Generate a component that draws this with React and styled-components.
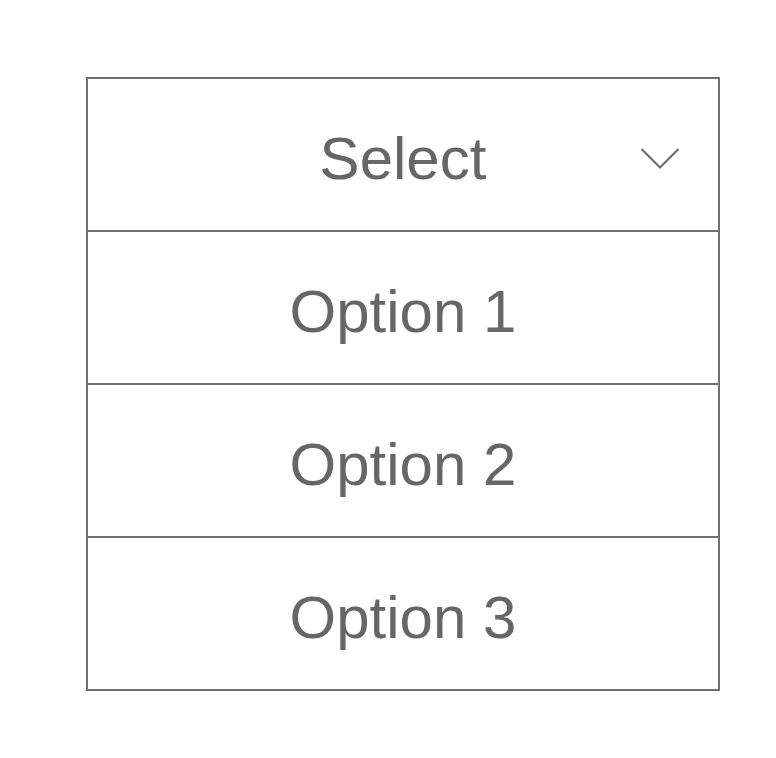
import React from "react";
import styled, { createGlobalStyle } from "styled-components";

const GlobalStyle = createGlobalStyle`
  html, body {
    margin: 0;
    padding: 0;
    background: #ffffff;
  }
  body {
    font-family: "Liberation Sans", Arial, Helvetica, sans-serif;
  }
`;

const Page = styled.div`
  padding: 77px 0 0 86px;
`;

const Dropdown = styled.div`
  width: 630px;
  border: 2px solid #707070;
  display: flex;
  flex-direction: column;
`;

const Row = styled.div`
  height: 151px;
  display: grid;
  grid-template-columns: 1fr auto 1fr;
  align-items: center;
  color: #666666;
  font-size: 60px;
  line-height: 1;
  border-top: ${(p) => (p.$first ? "none" : "2px solid #707070")};
`;

const Label = styled.span`
  grid-column: 2;
  padding-top: 8px;
`;

const Chevron = styled.svg`
  grid-column: 3;
  justify-self: end;
  margin-right: 38px;
  margin-top: 8px;
  width: 40px;
  height: 24px;
`;

export default function App() {
  const options = ["Option 1", "Option 2", "Option 3"];
  return (
    <>
      <GlobalStyle />
      <Page>
        <Dropdown>
          <Row $first>
            <Label>Select</Label>
            <Chevron viewBox="0 0 40 24" fill="none">
              <polyline
                points="1.5,2 20,20.5 38.5,2"
                stroke="#707070"
                strokeWidth="2.2"
              />
            </Chevron>
          </Row>
          {options.map((o) => (
            <Row key={o}>
              <Label>{o}</Label>
            </Row>
          ))}
        </Dropdown>
      </Page>
    </>
  );
}
